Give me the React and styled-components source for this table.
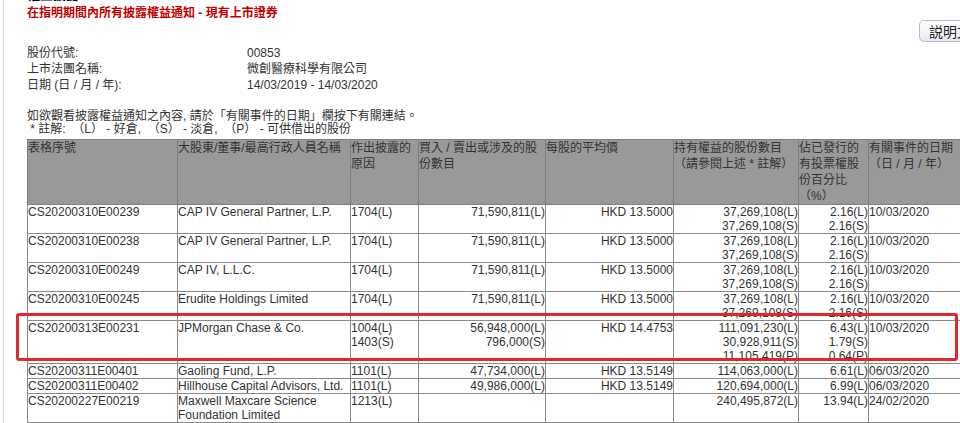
import React from 'react';
import styled, { createGlobalStyle } from 'styled-components';

const GlobalStyle = createGlobalStyle`
  html, body {
    margin: 0;
    padding: 0;
    background: #fff;
    overflow: hidden;
  }
  body {
    font-family: "Liberation Sans", Arial, "Noto Sans CJK TC", sans-serif;
    font-size: 12px;
    color: #333;
  }
`;

const Page = styled.div`
  margin-left: 3px;
  border-left: 1px solid #d4d4d4;
  padding-left: 23px;
  width: 1060px;
  min-height: 423px;
`;

const TopBar = styled.div`
  display: grid;
  grid-template-columns: 892px auto;
  align-items: start;
`;

const Heading = styled.div`
  margin-top: -13px;
  line-height: 16px;
  font-size: 13px;
  font-weight: bold;
  color: #000;
`;

const Title = styled.div`
  margin-top: 2px;
  line-height: 16px;
  font-size: 12px;
  font-weight: bold;
  color: #c00000;
`;

const HelpButton = styled.button`
  margin-top: 20px;
  height: 22px;
  width: 80px;
  padding: 0 0 0 9px;
  text-align: left;
  border: 1px solid #b8b8c4;
  border-radius: 5px;
  background: linear-gradient(#ffffff, #e8e8f2);
  font-family: "Noto Sans CJK TC", sans-serif;
  font-size: 14px;
  line-height: 20px;
  color: #222;
  white-space: nowrap;
  overflow: hidden;
`;

const InfoGrid = styled.div`
  display: grid;
  grid-template-columns: 220px auto;
  margin-top: 3px;
  line-height: 16px;
`;

const Notes = styled.div`
  margin-top: 17px;
  line-height: 13px;
  white-space: pre;
`;

const TableWrap = styled.div`
  position: relative;
  margin-top: 3px;
`;

const Table = styled.table`
  border-collapse: collapse;
  table-layout: fixed;
  width: 941px;
`;

const Th = styled.th`
  background: #999999;
  border: 1px solid #7f7f7f;
  padding: 0;
  font-weight: normal;
  text-align: left;
  vertical-align: top;
  line-height: 16px;
  color: #333;
`;

const Td = styled.td`
  border: 1px solid #8a8a8a;
  padding: 0;
  line-height: 14px;
  vertical-align: top;
  text-align: ${(p) => (p.$right ? 'right' : 'left')};
  color: #333;
`;

const Highlight = styled.div`
  position: absolute;
  left: -11px;
  top: 174px;
  width: 936px;
  height: 42px;
  border: 3px solid #e3262a;
  border-radius: 3px;
  pointer-events: none;
`;

const widths = [150, 173, 68, 127, 128, 125, 70, 100];

const headers = [
  '表格序號',
  '大股東/董事/最高行政人員名稱',
  '作出披露的原因',
  '買入 / 賣出或涉及的股份數目',
  '每股的平均價',
  '持有權益的股份數目（請參閱上述 * 註解）',
  '佔已發行的有投票權股份百分比（%）',
  '有關事件的日期（日 / 月 / 年）',
];

const rows = [
  ['CS20200310E00239', 'CAP IV General Partner, L.P.', ['1704(L)'], ['71,590,811(L)'], 'HKD 13.5000', ['37,269,108(L)', '37,269,108(S)'], ['2.16(L)', '2.16(S)'], '10/03/2020'],
  ['CS20200310E00238', 'CAP IV General Partner, L.P.', ['1704(L)'], ['71,590,811(L)'], 'HKD 13.5000', ['37,269,108(L)', '37,269,108(S)'], ['2.16(L)', '2.16(S)'], '10/03/2020'],
  ['CS20200310E00249', 'CAP IV, L.L.C.', ['1704(L)'], ['71,590,811(L)'], 'HKD 13.5000', ['37,269,108(L)', '37,269,108(S)'], ['2.16(L)', '2.16(S)'], '10/03/2020'],
  ['CS20200310E00245', 'Erudite Holdings Limited', ['1704(L)'], ['71,590,811(L)'], 'HKD 13.5000', ['37,269,108(L)', '37,269,108(S)'], ['2.16(L)', '2.16(S)'], '10/03/2020'],
  ['CS20200313E00231', 'JPMorgan Chase & Co.', ['1004(L)', '1403(S)'], ['56,948,000(L)', '796,000(S)'], 'HKD 14.4753', ['111,091,230(L)', '30,928,911(S)', '11,105,419(P)'], ['6.43(L)', '1.79(S)', '0.64(P)'], '10/03/2020'],
  ['CS20200311E00401', 'Gaoling Fund, L.P.', ['1101(L)'], ['47,734,000(L)'], 'HKD 13.5149', ['114,063,000(L)'], ['6.61(L)'], '06/03/2020'],
  ['CS20200311E00402', 'Hillhouse Capital Advisors, Ltd.', ['1101(L)'], ['49,986,000(L)'], 'HKD 13.5149', ['120,694,000(L)'], ['6.99(L)'], '06/03/2020'],
  ['CS20200227E00219', 'Maxwell Maxcare Science Foundation Limited', ['1213(L)'], [], '', ['240,495,872(L)'], ['13.94(L)'], '24/02/2020'],
];

const Lines = ({ items }) =>
  items.map((t, i) => (
    <React.Fragment key={i}>
      {i > 0 && <br />}
      {t}
    </React.Fragment>
  ));

export default function App() {
  return (
    <>
      <GlobalStyle />
      <Page>
        <TopBar>
          <div>
            <Heading>權益披露</Heading>
            <Title>在指明期間內所有披露權益通知 - 現有上市證券</Title>
          </div>
          <HelpButton>説明文件</HelpButton>
        </TopBar>

        <InfoGrid>
          <div>股份代號:</div>
          <div>00853</div>
          <div>上市法團名稱:</div>
          <div>微創醫療科學有限公司</div>
          <div>日期 (日 / 月 / 年):</div>
          <div>14/03/2019 - 14/03/2020</div>
        </InfoGrid>

        <Notes>
          如欲觀看披露權益通知之內容, 請於「有關事件的日期」欄按下有關連結。
          <br />
          {' * 註解:  （L） - 好倉,  （S） - 淡倉,  （P） - 可供借出的股份'}
        </Notes>

        <TableWrap>
          <Table>
            <colgroup>
              {widths.map((w, i) => (
                <col key={i} style={{ width: w }} />
              ))}
            </colgroup>
            <thead>
              <tr>
                {headers.map((h) => (
                  <Th key={h}>{h}</Th>
                ))}
              </tr>
            </thead>
            <tbody>
              {rows.map((r) => (
                <tr key={r[0]}>
                  <Td>{r[0]}</Td>
                  <Td>{r[1]}</Td>
                  <Td>
                    <Lines items={r[2]} />
                  </Td>
                  <Td $right>
                    <Lines items={r[3]} />
                  </Td>
                  <Td $right>{r[4]}</Td>
                  <Td $right>
                    <Lines items={r[5]} />
                  </Td>
                  <Td $right>
                    <Lines items={r[6]} />
                  </Td>
                  <Td>{r[7]}</Td>
                </tr>
              ))}
            </tbody>
          </Table>
          <Highlight />
        </TableWrap>
      </Page>
    </>
  );
}
